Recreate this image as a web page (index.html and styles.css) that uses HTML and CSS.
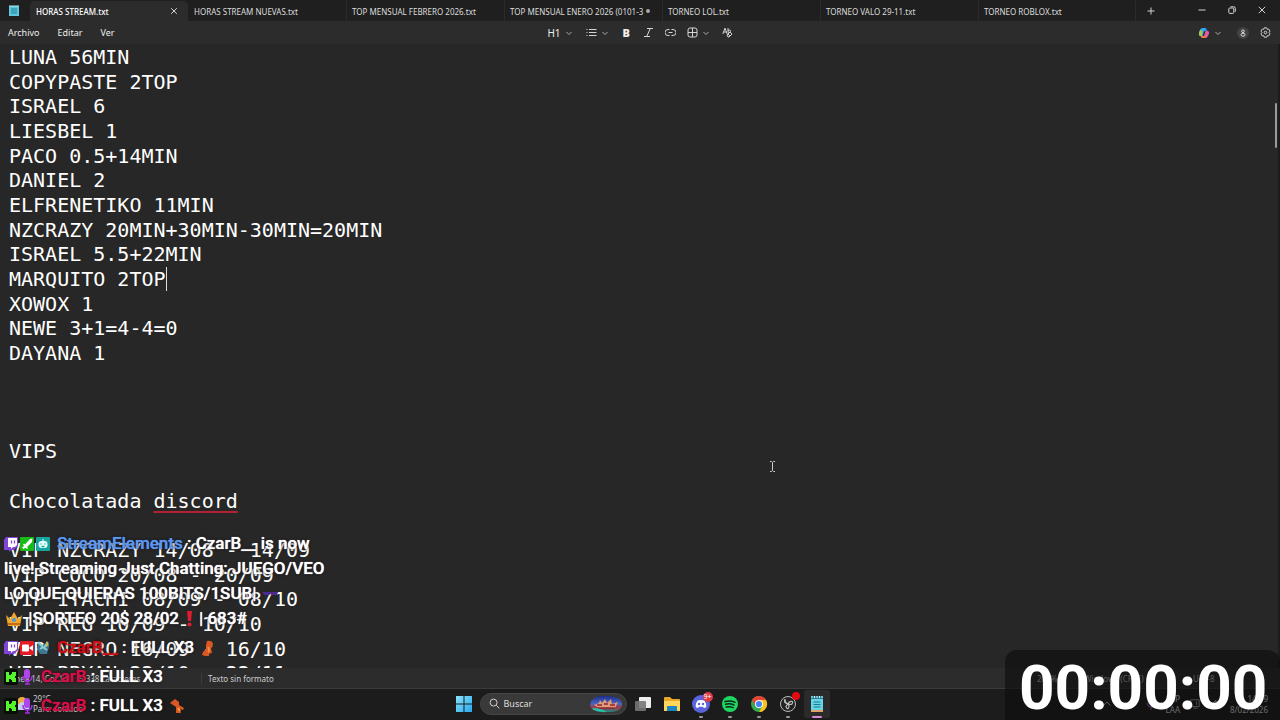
FILE: index.html
```html
<!DOCTYPE html>
<html lang="es">
<head>
<meta charset="utf-8">
<title>HORAS STREAM.txt</title>
<link rel="stylesheet" href="styles.css">
</head>
<body>
<div class="screen">
  <header class="tabs">
    <svg class="app-icon" viewBox="0 0 12 12"><rect x="1" y="1" width="10" height="10" fill="#5cc6dc"/><path d="M1 1h10" stroke="#b4e8f0" stroke-width="1"/><path d="M3 4h6M3 6h6M3 8h6" stroke="#207f98"/></svg>
    <div class="tab active"><button class="name">HORAS STREAM.txt</button><button class="close" aria-label="Cerrar pestaña"><svg viewBox="0 0 8 8"><path d="M1.2 1.2l5.6 5.6M6.8 1.2L1.2 6.8"/></svg></button></div>
    <div class="tab"><button class="name">HORAS STREAM NUEVAS.txt</button></div>
    <div class="tab"><button class="name">TOP MENSUAL FEBRERO 2026.txt</button></div>
    <div class="tab"><button class="name">TOP MENSUAL ENERO 2026 (0101-3</button><span class="unsaved"></span></div>
    <div class="tab"><button class="name">TORNEO LOL.txt</button></div>
    <div class="tab"><button class="name">TORNEO VALO 29-11.txt</button></div>
    <div class="tab last"><button class="name">TORNEO ROBLOX.txt</button></div>
    <button class="new-tab" aria-label="Nueva pestaña"><svg viewBox="0 0 8 8"><path d="M4 .5v7M.5 4h7"/></svg></button>
    <div class="window-buttons">
      <button aria-label="Minimizar"><svg viewBox="0 0 8 8"><path d="M.5 4h7"/></svg></button>
      <button aria-label="Restaurar"><svg viewBox="0 0 8 8"><rect x=".8" y="2" width="5" height="5.4" rx="1"/><path d="M2.6.8h3.2Q7.3.8 7.3 2.4v3.4"/></svg></button>
      <button aria-label="Cerrar"><svg viewBox="0 0 8 8"><path d="M.8.8l6.4 6.4M7.2.8L.8 7.2"/></svg></button>
    </div>
  </header>

  <nav class="menubar">
    <div class="menus"><button>Archivo</button><button>Editar</button><button>Ver</button></div>
    <div class="format">
      <button class="pair">H1 <svg class="chev" viewBox="0 0 6 6"><path d="M.5 2L3 4.5 5.500 2"/></svg></button>
      <button class="pair" aria-label="Lista"><svg class="ic" viewBox="0 0 11 11"><path d="M.5 2.500h1M.5 5.500h1M.5 8.500h1M3 2.500h7.500M3 5.500h7.500M3 8.500h7.500"/></svg><svg class="chev" viewBox="0 0 6 6"><path d="M.5 2L3 4.500 5.500 2"/></svg></button>
      <button class="bold">B</button>
      <button aria-label="Cursiva"><svg class="ic" viewBox="0 0 11 11"><path d="M4 1.500h6M1 9.500h6M7.300 1.500l-3.600 8"/></svg></button>
      <button aria-label="Vínculo"><svg class="ic" viewBox="0 0 11 11"><path d="M4.500 2.500h-1.500a3 3 0 0 0 0 6h1.500M6.500 2.500h1.500a3 3 0 0 1 0 6h-1.500M3.500 5.500h4"/></svg></button>
      <button class="pair" aria-label="Tabla"><svg class="ic" viewBox="0 0 11 11"><rect x="1" y="1" width="9" height="9" rx="2"/><path d="M5.500 1v9M1 5.500h9"/></svg><svg class="chev" viewBox="0 0 6 6"><path d="M.5 2L3 4.500 5.500 2"/></svg></button>
      <button class="clear" aria-label="Borrar formato"><svg class="ic" viewBox="0 0 11 11"><path d="M.8 7L3 1.200 5.200 7M1.500 5h3M6 1v4.500M6 3.500q2.500-1.500 2.500.8T6 5M5 8l3-3 2 2-3 3H6zM6 7l2 2"/></svg></button>
    </div>
    <div class="tools">
      <button class="pair" aria-label="Copilot"><svg class="copilot" viewBox="0 0 12 12"><path d="M5 1h3l1.500 3H6L4.500 9H2.500Q.5 9 1 6L2 3Q2.500 1 5 1z" fill="#38a8ed"/><path d="M1 6l1-3 2.500 1L4 9H2.500Q.6 9 1 6z" fill="#a3cb4d"/><path d="M7 11H4l-1.500-2H6l1.500-5h2Q11.600 4 11 6.500L10 9q-.6 2-3 2z" fill="#e35aa5"/><path d="M7 11H4L2.500 9H6l3-.5z" fill="#ef7b4c"/><path d="M7 1.200h1.200L9.500 4H8z" fill="#2768d3"/></svg><svg class="chev" viewBox="0 0 6 6"><path d="M.5 2L3 4.500 5.500 2"/></svg></button>
      <button class="user" aria-label="Cuenta"><svg viewBox="0 0 12 12"><circle cx="6" cy="6" r="6" fill="#424242"/><circle cx="6" cy="4.300" r="1.300" fill="none" stroke="#ddd"/><ellipse cx="6" cy="7.700" rx="2" ry="1.500" fill="none" stroke="#ddd"/></svg></button>
      <button aria-label="Configuración"><svg class="ic" viewBox="0 0 11 11"><path d="M4.300.8h2.400l.5 1.500 1.500-.2 1.300 2-.9 1.400.9 1.400-1.300 2-1.500-.2-.5 1.500H4.300l-.5-1.500-1.500.2L1 6.900l.9-1.400L1 4.100l1.300-2 1.500.2z"/><circle cx="5.500" cy="5.500" r="1.300"/></svg></button>
    </div>
  </nav>

  <main class="editor">
    <div class="lines">
      <div>LUNA 56MIN</div><div>COPYPASTE 2TOP</div><div>ISRAEL 6</div><div>LIESBEL 1</div><div>PACO 0.5+14MIN</div><div>DANIEL 2</div><div>ELFRENETIKO 11MIN</div><div>NZCRAZY 20MIN+30MIN-30MIN=20MIN</div><div>ISRAEL 5.5+22MIN</div><div><span class="caret">MARQUITO 2TOP</span></div><div>XOWOX 1</div><div>NEWE 3+1=4-4=0</div><div>DAYANA 1</div><div></div><div></div><div></div><div>VIPS</div><div></div><div>Chocolatada <span class="misspelt">discord</span></div><div></div><div>VIP NZCRAZY 14/08 - 14/09</div><div>VIP COCO 20/08 - 20/09</div><div>VIP ITACHI 08/09 - 08/10</div><div>VIP REG 10/09 - 10/10</div><div>VIP NEGRO 16/09 - 16/10</div><div>VIP BRYAN 22/10 - 22/11</div>
    </div>
    <div class="thumb"></div>
    <svg class="ibeam" viewBox="0 0 7 11"><path d="M1 .5h1.500l1 1 1-1H6M3.500 1.500v8M1 10.500h1.500l1-1 1 1H6"/></svg>
  </main>

  <footer class="status">
    <span class="position">Línea 14, Col 14</span><span class="count">5.338 caracteres</span><span class="kind">Texto sin formato</span><span class="zoom">200%</span><span class="eol">Windows (CRLF)</span><span class="enc">UTF-8</span>
  </footer>

  <div class="taskbar">
    <div class="weather"><svg viewBox="0 0 16 16"><circle cx="7" cy="6" r="5" fill="#efaa43"/><path d="M4 14a3 3 0 0 1 0-6 4 4 0 0 1 7 0 3 3 0 0 1 1 6z" fill="#bfd0ee"/></svg><div>29°C<br>Parc. soleado</div></div>
    <div class="apps">
      <button class="app" aria-label="Inicio"><svg viewBox="0 0 18 18"><defs><linearGradient id="win" x2="1" y2="1"><stop stop-color="#8be2fc"/><stop offset="1" stop-color="#27a9ed"/></linearGradient></defs><path d="M1 1h7.500v7.500H1zM9.500 1H17v7.500H9.500zM1 9.500h7.500V17H1zM9.500 9.500H17V17H9.500z" fill="url(#win)"/></svg></button>
      <label class="search"><svg class="lens" viewBox="0 0 12 12"><circle cx="5" cy="5" r="3.800"/><path d="M8 8l3.300 3.300"/></svg><input type="text" placeholder="Buscar" aria-label="Buscar"><svg class="art" viewBox="0 0 34 18"><defs><linearGradient id="sea" x2="0" y2="1"><stop stop-color="#1e2c8c"/><stop offset=".5" stop-color="#4967c4"/><stop offset=".7" stop-color="#a93440"/><stop offset="1" stop-color="#168e88"/></linearGradient></defs><path d="M2 6Q8 0 17 1q15 0 16 8 0 8-14 8Q3 18 1 11z" fill="url(#sea)"/><path d="M5 10l5-2 1-3 2 3 3-4 2 4 4-4 1 5 6-2-3 6H10z" fill="#e29b78"/><path d="M8 10h5M15 9h4M21 10h5M9 13h17" stroke="#8c2635" stroke-width="1.500"/><path d="M3 13q9 0 15 4Q5 17 3 13z" fill="#28c1a7"/></svg></label>
      <button class="app" aria-label="Vista de tareas"><svg viewBox="0 0 18 18"><rect x="5" y="2" width="12" height="11" rx="1" fill="#eee"/><rect x="1" y="6" width="11" height="10" rx="1" fill="#777" opacity=".9"/></svg></button>
      <button class="app" aria-label="Explorador"><svg viewBox="0 0 18 18"><path d="M1 3q0-1 1-1h5l2 2h7q1 0 1 1v11H1z" fill="#e9a928"/><path d="M1 6h16v9q0 1-1 1H2q-1 0-1-1z" fill="#ffd659"/><path d="M4 16v-4q0-1 1-1h8q1 0 1 1v4z" fill="#1684c5"/></svg></button>
      <button class="app running" aria-label="Discord"><svg viewBox="0 0 18 18"><circle cx="9" cy="9" r="9" fill="#5964dc"/><path d="M5.500 5.500q3.500-1 7 0 2 3 1.800 6.500-1.300 1-2.500 1l-.7-1.200H6.900L6.200 13q-1.300 0-2.500-1-.2-3.500 1.800-6.500z" fill="#fff"/><circle cx="7" cy="9" r="1.200" fill="#5964dc"/><circle cx="11" cy="9" r="1.200" fill="#5964dc"/></svg><span class="badge">9+</span></button>
      <button class="app running" aria-label="Spotify"><svg viewBox="0 0 18 18"><circle cx="9" cy="9" r="8" fill="#1ed760"/><path d="M4 6.500q5.500-1.500 10 .8M4.600 9.300q4.500-1.200 8.400.8M5.200 12q3.700-.9 6.900.7" fill="none" stroke="#102719" stroke-width="1.500" stroke-linecap="round"/></svg></button>
      <button class="app running" aria-label="Chrome"><svg viewBox="0 0 18 18"><circle cx="9" cy="9" r="8" fill="#35a853"/><path d="M2.100 5A8 8 0 0 1 16 5H9L5.500 11z" fill="#e64235"/><path d="M16 5A8 8 0 0 1 9 17l3.500-6L9 5z" fill="#fbc116"/><circle cx="9" cy="9" r="4" fill="#fff"/><circle cx="9" cy="9" r="3.100" fill="#4285f4"/></svg></button>
      <button class="app running" aria-label="OBS"><svg viewBox="0 0 18 18"><circle cx="9" cy="9" r="7.500" fill="#222" stroke="#bbb" stroke-width="1"/><path d="M6 4q0 4 3 5M13.500 6.500Q10 6 9 9M9 14q2-3 0-5M6 4q-2 4 3 5M13.500 6.500q1 4-4.500 2.500M9 14q-4-2 0-5" fill="none" stroke="#bbb" stroke-width="1.200"/></svg><span class="rec"></span></button>
      <button class="app current" aria-label="Bloc de notas"><svg viewBox="0 0 18 18"><path d="M3 2h12v13H3z" fill="#68d5e5"/><path d="M3 1h12v3H3z" fill="#277e9a"/><path d="M4 1v2M6.500 1v2M9 1v2M11.500 1v2M14 1v2" stroke="#dff" /><path d="M5.500 7h7M5.500 9.500h7M5.500 12h7" stroke="#157b96" stroke-width="1.200"/><path d="M3 15h12v2H3z" fill="#dca268"/></svg></button>
    </div>
    <div class="tray">
      <svg viewBox="0 0 10 10"><path d="M1.500 6.500L5 3l3.500 3.500"/></svg>
      <svg class="mic" viewBox="0 0 10 12"><rect x="3" y="1" width="4" height="6" rx="2"/><path d="M1 5q0 4 4 4t4-4M5 9v3"/></svg>
      <span class="lang">ESP<br>LAA</span>
      <svg class="net" viewBox="0 0 12 12"><rect x="1" y="1" width="10" height="8"/><path d="M8 3v4M4 11h5"/></svg>
      <svg viewBox="0 0 10 10"><path d="M1 4h2l3-3v8L3 6H1zM8 3q1.500 2 0 4"/></svg>
      <span class="clock">14:19<br>8/02/2026</span>
    </div>
  </div>

  <section class="chat">
    <p><svg viewBox="0 0 16 16"><use href="#twitch"/></svg><svg viewBox="0 0 16 16"><rect y="1" width="14" height="14" rx="1" fill="#16bb16"/><path d="M12.500 2.500L12 6l-5 5 1 1-1 1-1.500-1.300L3.500 13 2 11.500 4 10 3 8.500l1-1 1 1 5-5.500z" fill="#fff"/></svg><svg viewBox="0 0 16 16"><rect y="1" width="14" height="14" rx="1" fill="#17a69d"/><path d="M7 3v2" stroke="#fff"/><rect x="2.500" y="5" width="9" height="7" rx="3" fill="#e7ffff"/><path d="M5 7.500v1M9 7.500v1M5.500 10.500h3" stroke="#17a69d" stroke-width="1.300"/></svg><b class="blue">StreamElements</b> : CzarB__ is now live! Streaming Just Chatting: JUEGO/VEO LO QUE QUIERAS 100BITS/1SUB| <svg class="wide" viewBox="0 0 18 16"><path d="M0 6h16l-1 3h-5L9 8 7 9H2z" fill="#4b2a91"/></svg> <br><svg class="emote" viewBox="0 0 18 16"><path d="M1 4l4 4 4-7 4 7 4-4-2 11H3z" fill="#f1a62c"/><path d="M3 12h12v2H3z" fill="#c76b1e"/><circle cx="9" cy="9" r="2" fill="#489bd4"/></svg> |SORTEO 20$ 28/02<svg class="emote" viewBox="0 0 18 16"><path d="M7 0h5l-1 10H8z" fill="#df1c32"/><circle cx="9.500" cy="13.500" r="2" fill="#df1c32"/></svg>| 683#</p>
    <p><svg viewBox="0 0 16 16"><g id="twitch"><path d="M2 1h12v9l-4 4H7l-2 2v-2H0V4z" fill="#8344d6"/><path d="M4 2h9v7l-2 2H9l-2 2v-2H4z" fill="#fff"/><path d="M7.500 4.500v3M10.500 4.500v3" stroke="#8344d6" stroke-width="1.300"/></g></svg><svg viewBox="0 0 16 16"><rect y="1" width="14" height="14" rx="1" fill="#e31b24"/><rect x="2" y="4.500" width="7" height="7" rx="1" fill="#fff"/><path d="M9 8l4-3v6z" fill="#fff"/></svg><svg viewBox="0 0 16 16"><path d="M2 2l4 3 6-3 1 5-2 7H4L1 9z" fill="#3e7796"/><path d="M2 2l5 5-3 2M12 2L8 8l3 2" stroke="#8cced0" stroke-width="2" fill="none"/><path d="M10 1l3 4-3 2z" fill="#c7ba52"/></svg><b class="red">CzarB__</b> : FULL X3 <svg class="emote" viewBox="0 0 18 16"><path d="M8 1q5-1 6 3 0 3-2 4l1 5-3 1v2H6l-3-1 1-3 3-3V5z" fill="#d95722"/><path d="M9 7q2 3 0 5" stroke="#fa8b3b" stroke-width="2" fill="none"/></svg></p>
    <p><svg viewBox="0 0 16 16"><use href="#kick"/></svg><svg viewBox="0 0 16 16"><use href="#voice"/></svg><b class="pink">CzarB</b> : FULL X3</p>
    <p><svg viewBox="0 0 16 16"><g id="kick"><rect width="14" height="16" rx="2" fill="#071006"/><path d="M2 3h3v3h2V5h1V3h4v4h-1v2h1v4H8v-2H7v-1H5v3H2z" fill="#54f52a"/></g></svg><svg viewBox="0 0 16 16"><g id="voice"><rect x="4" y="0" width="6" height="10" rx="3" fill="#b044ee"/><path d="M3 7q0 5 4.500 5T12 7M7.500 12v3M5 15h5" fill="none" stroke="#a32de3" stroke-width="1.500"/></g></svg><b class="pink">CzarB</b> : FULL X3 <svg class="emote" viewBox="0 0 18 16"><path d="M2 5l5-4 4 3v3l5 3-1 2-3-1 1 4H8V9L5 7z" fill="#d95722"/><path d="M10 10l2 3" stroke="#f9a03c" stroke-width="2"/></svg></p>
  </section>

  <div class="timer">00:00:00</div>
</div>
</body>
</html>
```
FILE: styles.css
```css
* { box-sizing: border-box; }
body { margin: 0; background: #1c1c1c; color: #fff; font-family: "Noto Sans", "Open Sans", sans-serif; font-size: 9px; }
button { border: 0; padding: 0; background: none; color: inherit; font: inherit; display: flex; align-items: center; }
svg { display: block; flex: none; }
.screen { position: relative; display: flex; flex-direction: column; height: 100vh; overflow: hidden; }

.tabs { display: flex; flex: none; height: 21px; background: #1f1f1f; color: #ddd; font-size: 8px; }
.tabs svg, .menubar svg { fill: none; stroke: #d4d4d4; stroke-width: 1; }
.tabs .app-icon { width: 12px; height: 12px; margin: 5px 10px 0 8px; stroke: none; }
.tab { display: flex; align-items: center; flex: 0 1 158px; min-width: 0; padding: 0 5px; border-left: 1px solid #2b2b2b; margin-top: 1px; }
.tab .name { white-space: nowrap; }
.tab.active { background: #2c2c2c; color: #fff; border-color: #2c2c2c; border-radius: 5px 5px 0 0; font-weight: 500; }
.tab.active + .tab { border-color: transparent; }
.tab.last { border-right: 1px solid #2b2b2b; }
.close { margin-left: auto; }
.close svg, .new-tab svg { width: 8px; height: 8px; }
.close svg { margin-right: 5px; }
.unsaved { width: 4px; height: 4px; border-radius: 50%; background: #aaa; margin-left: auto; margin-right: 7px; }
.new-tab { padding: 0 11px; }
.window-buttons { display: flex; gap: 22px; margin-left: auto; padding: 0 14px 2px 0; }
.window-buttons svg { width: 8px; height: 8px; }

.menubar { display: grid; grid-template-columns: 1fr auto 1fr; align-items: center; flex: none; height: 23px; background: #2c2c2c; color: #eee; }
.menus, .format, .tools { display: flex; align-items: center; }
.menus { gap: 18px; padding-left: 8px; }
.format { gap: 11px; font-size: 10px; }
.pair { gap: 5px; }
.ic { width: 11px; height: 11px; }
.menubar .chev { width: 6px; height: 6px; stroke: #aaa; }
.format .pair:first-child { margin-right: 3px; }
.format .clear { margin-left: 2px; }
.format .bold { width: 9px; margin-left: 4px; font-weight: 900; font-size: 11px; }
.tools { justify-content: flex-end; gap: 16px; padding-right: 9px; }
.menubar .copilot { width: 12px; height: 12px; stroke: none; }
.user svg { width: 12px; height: 12px; }
.menubar .user svg { stroke: none; }
.user { margin-right: -5px; }

.editor { position: relative; flex: 1; min-height: 0; overflow: hidden; display: flex; flex-direction: column; padding-top: 1px; background: #272727; border-right: 2px solid #1c1c1c; }
.lines { flex: 1 0 auto; height: calc(100% + 18px); display: grid; grid-auto-rows: 1fr; padding-left: 9px; font: 20px/24px "DejaVu Sans Mono", "Liberation Mono", monospace; white-space: pre; }
.caret { border-right: 1px solid #ddd; }
.misspelt { text-decoration: underline #b22234 2px; text-underline-offset: 3px; text-decoration-skip-ink: none; }
.thumb { position: absolute; right: 1px; top: 59px; width: 2px; height: 45px; border-radius: 1px; background: #999; }
.ibeam { position: absolute; left: 769px; top: 417px; width: 7px; height: 11px; fill: none; stroke: #ccc; }

.status { display: flex; align-items: center; flex: none; height: 21px; padding-left: 9px; background: #2c2c2c; border-bottom: 1px solid #3b3b3b; color: #ccc; font-size: 8px; }
.status span { white-space: nowrap; }
.position { flex: 0 0 70px; }
.count { flex: 0 0 122px; }
.kind { flex: 1; border-left: 1px solid #3b3b3b; padding-left: 6px; }
.zoom { flex: 0 0 47px; }
.eol { flex: 0 0 109px; }
.enc { flex: 0 0 87px; }

.taskbar { display: grid; grid-template-columns: 1fr auto 1fr; align-items: center; flex: none; height: 31px; padding: 0 0 2px 0; background: #1c1c1c; }
.weather { display: flex; align-items: center; gap: 2px; padding-left: 15px; font-size: 8px; line-height: 10px; color: #ccc; }
.weather svg { width: 16px; height: 16px; }
.apps { display: flex; align-items: center; gap: 3px; }
.app { position: relative; width: 26px; height: 28px; justify-content: center; border-radius: 3px; }
.app svg { width: 18px; height: 18px; }
.running::after, .current::after { content: ""; position: absolute; left: 11px; bottom: 0; width: 4px; height: 2px; border-radius: 1px; background: #999; }
.current { background: #2b2b2b; }
.current::after { left: 8px; width: 10px; background: #d68bd6; }
.badge, .rec { position: absolute; right: 1px; top: 2px; width: 10px; height: 10px; border-radius: 50%; background: #df3946; }
.badge { font-size: 7px; line-height: 10px; text-align: center; }
.rec { width: 8px; height: 8px; background: #e50914; }
.search { display: flex; align-items: center; width: 147px; height: 22px; padding: 0 3px 0 8px; border-radius: 11px; background: #393939; border: 1px solid #454545; }
.lens { width: 11px; height: 11px; fill: none; stroke: #ddd; }
.search input { flex: 1; min-width: 0; margin: 0; padding: 0 0 0 4px; border: 0; outline: 0; background: none; color: #ddd; font: 9px "Noto Sans", sans-serif; }
.search input::placeholder { color: #ddd; opacity: 1; }
.art { width: 34px; height: 18px; }
.tray { display: flex; justify-content: flex-end; align-items: center; gap: 10px; padding-right: 12px; font-size: 8px; line-height: 11px; text-align: right; color: #eee; }
.tray svg { width: 10px; height: 12px; fill: none; stroke: #ccc; }
.tray .mic { margin-left: 24px; stroke: #b57ad6; }

.chat { position: absolute; left: 4px; bottom: 2px; width: 326px; display: flex; flex-direction: column; gap: 4px; font: 500 17px/25px Roboto, sans-serif; text-shadow: 0 0 1px currentColor, 0 0 3px #000; }
.chat p { margin: 0; }
.chat svg { display: inline-block; width: 16px; height: 16px; vertical-align: -3px; }
.chat b { font-weight: 500; margin-left: 5px; }
.chat .emote, .chat .wide { width: 20px; }
.blue { color: #5b96f0; }
.red { color: #d20c14; }
.pink { color: #d80f48; }

.timer { position: absolute; right: 0; bottom: 0; width: 275px; height: 70px; padding-left: 14px; border-radius: 12px 12px 0 0; background: rgba(12, 12, 12, .6); font: 700 62px/76px Roboto, sans-serif; white-space: nowrap; }
```
